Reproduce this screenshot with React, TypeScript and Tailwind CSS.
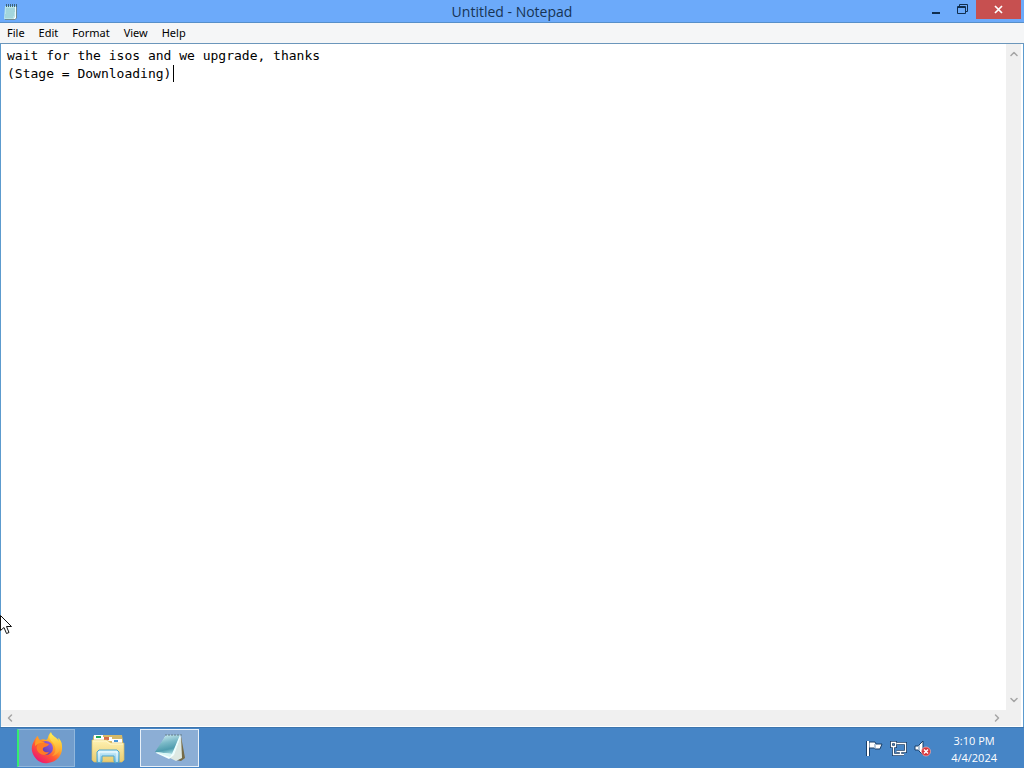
import React, { useState } from 'react';
import { ChevronDown, ChevronLeft, ChevronRight, ChevronUp } from 'lucide-react';

const menus = ['File', 'Edit', 'Format', 'View', 'Help'];

const NotepadSmallIcon = () => (
  <svg width="16" height="18" viewBox="0 0 16 18" aria-hidden="true">
    <path d="M4 3h10v12l-2 2H2z" fill="#718b91" />
    <path d="M2 3h11v11l-3 2H1z" fill="#b9e4e8" />
    <path d="M3 6h9M3 8h9M3 10h8M2 12h9M2 14h8" stroke="#83bfca" strokeWidth=".8" />
    <path d="M12.500 4v10" stroke="#eefafa" />
    <path d="M3.500 1v3M5.500 1v3M7.500 1v3M9.500 1v3M11.500 1v3M13.500 1v3" stroke="#3d6478" strokeWidth="1" />
    <path d="M10 16l3-3v2l-1 1z" fill="#fff" />
  </svg>
);

const FirefoxIcon = () => (
  <svg width="32" height="32" viewBox="0 0 32 32" aria-hidden="true">
    <defs>
      <linearGradient id="fox" x1="0.85" y1="0.05" x2="0.2" y2="0.95">
        <stop offset="0" stopColor="#fff04a" />
        <stop offset=".35" stopColor="#ffad28" />
        <stop offset=".65" stopColor="#ff5635" />
        <stop offset="1" stopColor="#ed1474" />
      </linearGradient>
      <linearGradient id="foxGlobe" x1="1" y1="0" x2="0" y2="1">
        <stop stopColor="#9965ee" />
        <stop offset="1" stopColor="#513398" />
      </linearGradient>
      <linearGradient id="foxTail" x1="0" y1="0" x2="0" y2="1">
        <stop stopColor="#fff35a" />
        <stop offset="1" stopColor="#ff952b" />
      </linearGradient>
    </defs>
    <path d="M20 0c-4 4-2 7-5 8-2-1-4-1-6 0C7 7 7 5 7 4 5 5 4 7 3 9 0 14 0 19 3 24c3 5 8 8 14 7 9-1 15-8 14-17 0-4-2-7-4-8l1 4C26 5 21 5 20 0z" fill="url(#fox)" />
    <circle cx="15" cy="16" r="7" fill="url(#foxGlobe)" />
    <path d="M20 1c-3 4-1 7 2 10 4 5 3 10-1 13 6-1 9-6 8-12-1-6-7-7-9-11z" fill="url(#foxTail)" />
    <path d="M4 10c3-2 7-2 10 1l4 1c-1 3-4 2-6 4-1 3 2 5 6 4-3 5-10 3-12-2-1-3 0-5 1-6z" fill="#ff7b26" />
    <path d="M7 4c0 4 3 5 7 7-4-1-7 0-10 3 0-5 1-8 3-10z" fill="#ff9b27" />
  </svg>
);

const ExplorerIcon = () => (
  <svg width="34" height="32" viewBox="0 0 34 32" aria-hidden="true">
    <defs>
      <linearGradient id="folder" x1="0" y1="0" x2="0" y2="1">
        <stop stopColor="#fff2b2" />
        <stop offset="1" stopColor="#e8cb70" />
      </linearGradient>
      <linearGradient id="stand" x1="0" y1="0" x2="0" y2="1">
        <stop stopColor="#dff7ff" />
        <stop offset="1" stopColor="#66b7df" />
      </linearGradient>
    </defs>
    <path d="M2 5l1-2h28l1 6v4H2z" fill="#d5b968" />
    <path d="M3 3h9v5H3z" fill="#fff" />
    <path d="M5 4h5v2H5z" fill="#20a957" />
    <path d="M12 5h9v4h-9z" fill="#fff" />
    <path d="M13 5h5v3h-5z" fill="#d46c48" />
    <path d="M21 7h10v4H21z" fill="#fff" />
    <path d="M23 8h4v2h-4z" fill="#4695d7" />
    <path d="M1 8h15l4 3h13v17l-2 2H3l-2-2z" fill="url(#folder)" stroke="#d9bc64" strokeWidth=".7" />
    <path d="M2 9h13l4 3h13" fill="none" stroke="#fff8cf" />
    <path d="M6 20l2-2h18l2 2v10l-4 1-1-2v-5H11v5l-1 2-4-1z" fill="url(#stand)" stroke="#4ca6cf" />
    <path d="M8 20h18M8 20v10M26 20v10" stroke="#f2fcff" />
  </svg>
);

const NotepadIcon = () => (
  <svg width="32" height="30" viewBox="0 0 32 30" aria-hidden="true">
    <defs>
      <linearGradient id="page" x1="0.3" y1="0" x2="0.6" y2="1">
        <stop stopColor="#c9e9ef" />
        <stop offset=".4" stopColor="#7cbac8" />
        <stop offset=".75" stopColor="#4f9cae" />
        <stop offset="1" stopColor="#a5dadf" />
      </linearGradient>
    </defs>
    <path d="M27 3l4 22-4 3-5-1z" fill="#756b48" />
    <path d="M27 3l1 22-6 3-8-4z" fill="#dfe9e3" />
    <path d="M12 2h15l-7 20-5 4-13-6z" fill="#f4ffff" />
    <path d="M12 2h14l-8 19-17-2z" fill="url(#page)" />
    <path d="M1 19l17 2-2 3z" fill="#d6f5f5" />
    <path d="M12 1v2M15 1v2M18 1v2M21 1v2M24 1v2M27 1v2" stroke="#647f88" />
    <path d="M26 4l-7 18" stroke="#eaffff" />
  </svg>
);

const FlagIcon = () => (
  <svg width="17" height="17" viewBox="0 0 17 17" aria-hidden="true">
    <path d="M1 1v15M3 2v14" stroke="#183e68" strokeWidth="2" />
    <path d="M3 2h6l1 2h6l-2 5H9L8 8H3z" fill="#fff" stroke="#183e68" strokeWidth="1" />
    <path d="M2 1v15" stroke="#fff" strokeWidth="2" />
    <path d="M9 4v5" stroke="#7093b8" />
  </svg>
);

const NetworkIcon = () => (
  <svg width="17" height="17" viewBox="0 0 17 17" fill="none" aria-hidden="true">
    <path d="M6.500 3.500h9v8h-9M10.500 11v3M6 14.500h8M3.500 7v7.500h3M1.500 2.500h4v4h-4z" stroke="#183e68" strokeWidth="3" />
    <path d="M6.500 3.500h9v8h-9M10.500 11v3M6 14.500h8M3.500 7v7.500h3M1.500 2.500h4v4h-4z" stroke="#fff" strokeWidth="1.300" />
  </svg>
);

const MutedIcon = () => (
  <svg width="17" height="17" viewBox="0 0 17 17" aria-hidden="true">
    <path d="M1 6h3l5-5v14l-5-5H1z" fill="#fff" stroke="#183e68" />
    <path d="M5 5v6" stroke="#5b83ad" />
    <circle cx="12" cy="11.500" r="4.500" fill="#d93439" stroke="#f1b6b8" strokeWidth=".7" />
    <path d="M10 9.500l4 4M14 9.500l-4 4" stroke="#fff" strokeWidth="1.500" />
  </svg>
);

export default function App() {
  const [text, setText] = useState('wait for the isos and we upgrade, thanks\n(Stage = Downloading)');

  return (
    <div className="relative flex h-screen flex-col overflow-hidden bg-[#4685c6] font-['Noto_Sans',sans-serif] text-black">
      <main className="flex min-h-0 flex-1 flex-col">
        <header className="grid h-[23px] shrink-0 grid-cols-[1fr_auto_1fr] border-b border-[#578fc9] bg-[#6caafa]">
          <div className="flex items-center pl-[3px]">
            <NotepadSmallIcon />
          </div>
          <h1 className="font-['Open_Sans',sans-serif] text-[14px] leading-[23px] text-[#173454]">Untitled - Notepad</h1>
          <div className="flex items-start justify-end pr-[3px]">
            <button aria-label="Minimize" className="flex h-[19px] w-[26px] items-center justify-center">
              <svg width="10" height="12" viewBox="0 0 10 12"><path d="M0 8h8v2H0z" fill="#102e4e" /></svg>
            </button>
            <button aria-label="Restore" className="flex h-[19px] w-[26px] items-center justify-center">
              <svg width="12" height="12" viewBox="0 0 12 12" fill="none" stroke="#102e4e">
                <path d="M2.500 3V.500h8v7H8M.500 2.500h8v7h-8zM0 3.500h9" />
              </svg>
            </button>
            <button aria-label="Close" className="flex h-[19px] w-[45px] items-center justify-center bg-[#c75050]">
              <svg width="9" height="9" viewBox="0 0 9 9"><path d="M1 1l7 7M8 1L1 8" stroke="#fff" strokeWidth="1.700" /></svg>
            </button>
          </div>
        </header>

        <nav className="flex h-[21px] shrink-0 items-center border-b border-[#6b96bb] bg-[#f5f6f7] text-[11px] leading-[18px]">
          {menus.map(menu => (
            <button key={menu} className="px-[7px]">{menu}</button>
          ))}
        </nav>

        <div className="grid min-h-0 flex-1 grid-cols-[1fr_15px] grid-rows-[1fr_16px] border-x border-[#5c9bce] bg-white pr-[2px] pb-px">
          <div className="relative">
            <textarea
              aria-label="Document text"
              value={text}
              onChange={e => setText(e.target.value)}
              spellCheck={false}
              wrap="off"
              className="block h-full w-full resize-none overflow-hidden bg-white px-[6px] py-[3px] font-['DejaVu_Sans_Mono',monospace] text-[13px] leading-[18px] caret-transparent outline-none"
            />
            <span className="absolute top-[21px] left-[172px] h-[17px] w-px bg-black" />
          </div>
          <div className="flex flex-col items-center justify-between bg-[#f0f0f0] py-1 text-[#a5a5a5]">
            <button aria-label="Scroll up"><ChevronUp size={12} strokeWidth={3} /></button>
            <button aria-label="Scroll down"><ChevronDown size={12} strokeWidth={3} /></button>
          </div>
          <div className="flex items-center justify-between bg-[#f0f0f0] px-[3px] text-[#a5a5a5]">
            <button aria-label="Scroll left"><ChevronLeft size={12} strokeWidth={3} /></button>
            <button aria-label="Scroll right"><ChevronRight size={12} strokeWidth={3} /></button>
          </div>
          <div className="bg-[#f0f0f0]" />
        </div>
      </main>

      <footer className="flex h-[41px] shrink-0 items-center justify-between border-t border-[#3c75ae] bg-[#4685c6] text-white">
        <div className="flex items-center gap-[7px] pl-[17px]">
          <button aria-label="Firefox" className="flex h-[38px] w-[58px] items-center justify-center border border-l-2 border-[#91b7dc] border-l-[#35ed70] bg-[#729dcc]">
            <FirefoxIcon />
          </button>
          <button aria-label="File Explorer" className="flex h-[38px] w-[51px] items-center justify-center">
            <ExplorerIcon />
          </button>
          <button aria-label="Notepad" className="flex h-[38px] w-[59px] items-center justify-center border border-[#e8f0f8] bg-[#8caed5]">
            <NotepadIcon />
          </button>
        </div>
        <div className="flex items-center pt-px pr-[27px]">
          <div className="flex items-center gap-[7px] pr-5">
            <button aria-label="Action Center"><FlagIcon /></button>
            <button aria-label="Network"><NetworkIcon /></button>
            <button aria-label="Volume muted"><MutedIcon /></button>
          </div>
          <button className="text-center font-['Open_Sans',sans-serif] text-[11px] leading-[17px]">
            <time className="block">3:10 PM</time>
            <time className="block">4/4/2024</time>
          </button>
        </div>
      </footer>

      <svg className="pointer-events-none absolute top-[614px] left-0" width="13" height="21" viewBox="0 0 13 21" aria-hidden="true">
        <path d="M.5 1.5v15l3.5-3 2.5 6 2.5-1-2.5-6h5z" fill="#fff" stroke="#111" />
      </svg>
    </div>
  );
}
